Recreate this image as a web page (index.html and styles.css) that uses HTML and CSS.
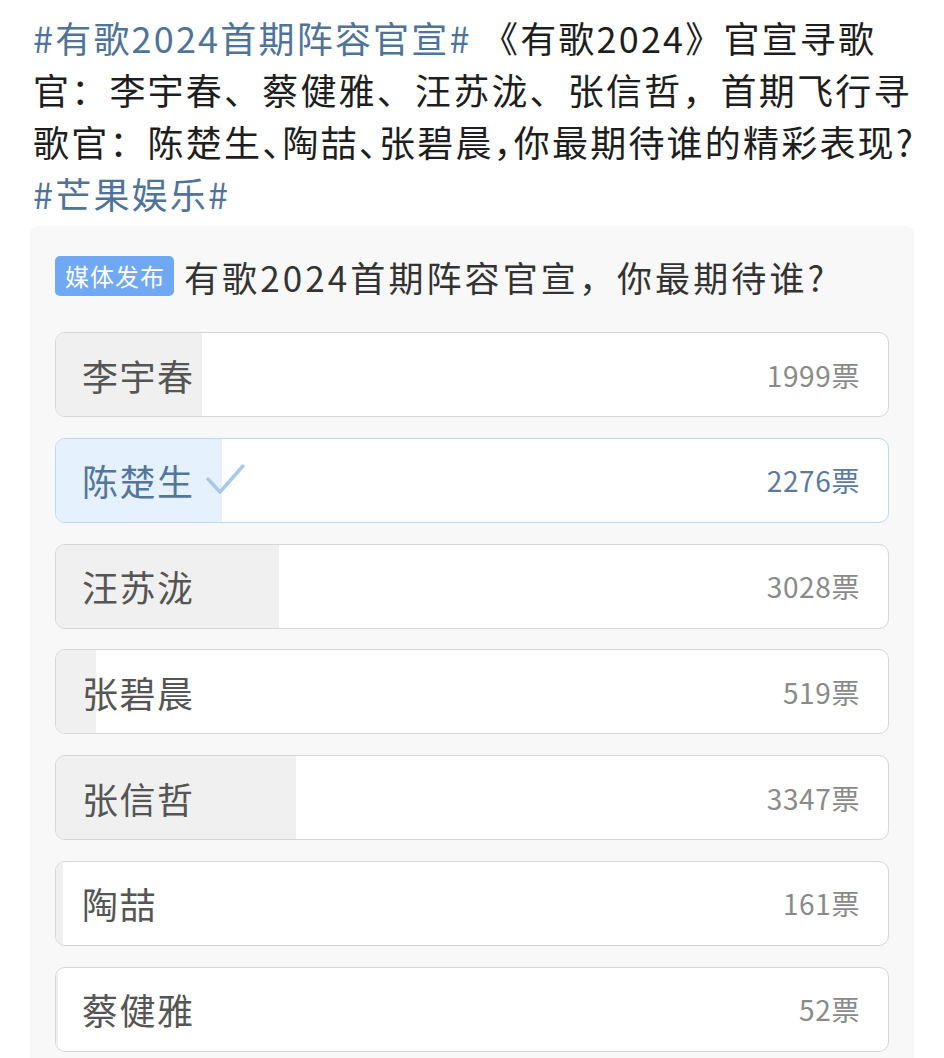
FILE: index.html
```html
<!DOCTYPE html>
<html lang="zh">
<head>
  <meta charset="UTF-8">
  <meta name="viewport" content="width=device-width, initial-scale=1.0">
  <title>有歌2024 投票</title>
  <link rel="stylesheet" href="styles.css">
</head>
<body>
  <div class="post-text">
    <span class="topic">#有歌2024首期阵容官宣#</span> 《有歌2024》官宣寻歌<br>
    官：李宇春、蔡健雅、汪苏泷、张信哲，首期飞行寻<br>
    歌官：<span class="tight">陈楚生、陶喆、张碧晨，</span>你最期待谁的精彩表现?<br>
    <span class="topic">#芒果娱乐#</span>
  </div>

  <!-- Poll card -->
  <div class="poll">
    <div class="poll-head">
      <span class="badge">媒体发布</span>
      <span class="poll-title">有歌2024首期阵容官宣，你最期待谁?</span>
    </div>

    <div class="options">
      <div class="option">
        <div class="fill" style="width: 17.6%"></div>
        <span class="name">李宇春</span>
        <span class="count">1999票</span>
      </div>
      <div class="option selected">
        <div class="fill" style="width: 20%"></div>
        <span class="name">陈楚生
          <svg class="check" viewBox="0 0 40 32" width="40" height="32"><path d="M3 15 L15 28 L38 2" fill="none" stroke="currentColor" stroke-width="3.5" stroke-linecap="round" stroke-linejoin="round"/></svg>
        </span>
        <span class="count">2276票</span>
      </div>
      <div class="option">
        <div class="fill" style="width: 26.8%"></div>
        <span class="name">汪苏泷</span>
        <span class="count">3028票</span>
      </div>
      <div class="option">
        <div class="fill" style="width: 4.8%"></div>
        <span class="name">张碧晨</span>
        <span class="count">519票</span>
      </div>
      <div class="option">
        <div class="fill" style="width: 28.8%"></div>
        <span class="name">张信哲</span>
        <span class="count">3347票</span>
      </div>
      <div class="option">
        <div class="fill" style="width: 0.9%"></div>
        <span class="name">陶喆</span>
        <span class="count">161票</span>
      </div>
      <div class="option">
        <div class="fill" style="width: 0.3%"></div>
        <span class="name">蔡健雅</span>
        <span class="count">52票</span>
      </div>
    </div>
  </div>
</body>
</html>
```

FILE: styles.css
```css
body {
  margin: 0;
  background: #ffffff;
  font-family: "Noto Sans CJK SC", "Noto Sans", sans-serif;
  color: #1e1e1e;
  height: 1058px;
  overflow: hidden;
}

.post-text {
  padding: 11px 0 0 33px;
  font-size: 36px;
  line-height: 52px;
  letter-spacing: 2.2px;
  white-space: nowrap;
}

.topic {
  color: #4f7399;
}

.tight {
  font-feature-settings: "halt";
}

/* Poll card */
.poll {
  margin: 7px 30px 0 30px;
  padding: 22px 25px 40px 25px;
  background: #f8f8f8;
  border-radius: 8px;
}

.poll-head {
  display: flex;
  align-items: center;
  gap: 10px;
  height: 56px;
}

.badge {
  background: #71a8f3;
  color: #ffffff;
  font-size: 24px;
  letter-spacing: 1px;
  line-height: 40px;
  padding: 0 9px 0 10px;
  border-radius: 5px;
}

.poll-title {
  font-size: 35px;
  letter-spacing: 3.1px;
  color: #333333;
}

.options {
  display: flex;
  flex-direction: column;
  gap: 20.8px;
  margin-top: 28px;
}

.option {
  position: relative;
  box-sizing: border-box;
  display: flex;
  align-items: center;
  justify-content: space-between;
  height: 85px;
  padding: 0 28px 0 26px;
  background: #ffffff;
  border: 1.5px solid #d6d6d6;
  border-radius: 10px;
  overflow: hidden;
}

.option .fill {
  position: absolute;
  left: 0;
  top: 0;
  bottom: 0;
  background: #f0f0f0;
}

.name,
.count {
  position: relative;
}

.name {
  display: flex;
  align-items: center;
  gap: 10px;
  font-size: 36px;
  letter-spacing: 1.5px;
  color: #555555;
}

.count {
  font-size: 28px;
  letter-spacing: 0.6px;
  color: #8a8a8a;
}

.option.selected {
  border-color: #bcd7ee;
}

.option.selected .fill {
  background: #e5f2fd;
}

.option.selected .name {
  color: #55769b;
}

.option.selected .count {
  color: #5b7a9c;
}

.check {
  color: #a8c8ee;
}
```
